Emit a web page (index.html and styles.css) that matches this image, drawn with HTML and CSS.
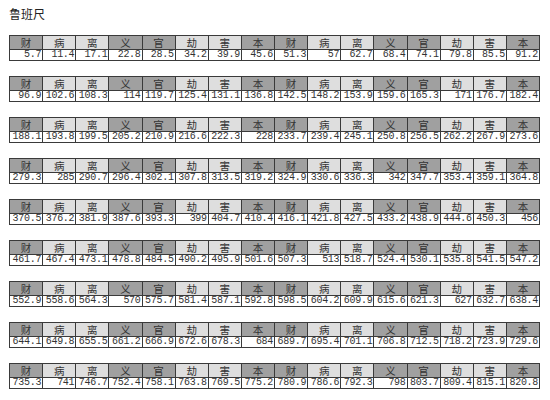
FILE: index.html
```html
<!DOCTYPE html>
<html lang="zh">
<head>
<meta charset="utf-8">
<title>鲁班尺</title>
<link rel="stylesheet" href="styles.css">
</head>
<body>
<div class="page">
<h1 class="title">鲁班尺</h1>
<div class="tables">
<table class="ruler"><tr class="hd"><th class="d">财</th><th class="l">病</th><th class="l">离</th><th class="d">义</th><th class="d">官</th><th class="l">劫</th><th class="l">害</th><th class="d">本</th><th class="d">财</th><th class="l">病</th><th class="l">离</th><th class="d">义</th><th class="d">官</th><th class="l">劫</th><th class="l">害</th><th class="d">本</th></tr>
<tr class="vals"><td>5.7</td><td>11.4</td><td>17.1</td><td>22.8</td><td>28.5</td><td>34.2</td><td>39.9</td><td>45.6</td><td>51.3</td><td>57</td><td>62.7</td><td>68.4</td><td>74.1</td><td>79.8</td><td>85.5</td><td>91.2</td></tr></table>
<table class="ruler"><tr class="hd"><th class="d">财</th><th class="l">病</th><th class="l">离</th><th class="d">义</th><th class="d">官</th><th class="l">劫</th><th class="l">害</th><th class="d">本</th><th class="d">财</th><th class="l">病</th><th class="l">离</th><th class="d">义</th><th class="d">官</th><th class="l">劫</th><th class="l">害</th><th class="d">本</th></tr>
<tr class="vals"><td>96.9</td><td>102.6</td><td>108.3</td><td>114</td><td>119.7</td><td>125.4</td><td>131.1</td><td>136.8</td><td>142.5</td><td>148.2</td><td>153.9</td><td>159.6</td><td>165.3</td><td>171</td><td>176.7</td><td>182.4</td></tr></table>
<table class="ruler"><tr class="hd"><th class="d">财</th><th class="l">病</th><th class="l">离</th><th class="d">义</th><th class="d">官</th><th class="l">劫</th><th class="l">害</th><th class="d">本</th><th class="d">财</th><th class="l">病</th><th class="l">离</th><th class="d">义</th><th class="d">官</th><th class="l">劫</th><th class="l">害</th><th class="d">本</th></tr>
<tr class="vals"><td>188.1</td><td>193.8</td><td>199.5</td><td>205.2</td><td>210.9</td><td>216.6</td><td>222.3</td><td>228</td><td>233.7</td><td>239.4</td><td>245.1</td><td>250.8</td><td>256.5</td><td>262.2</td><td>267.9</td><td>273.6</td></tr></table>
<table class="ruler"><tr class="hd"><th class="d">财</th><th class="l">病</th><th class="l">离</th><th class="d">义</th><th class="d">官</th><th class="l">劫</th><th class="l">害</th><th class="d">本</th><th class="d">财</th><th class="l">病</th><th class="l">离</th><th class="d">义</th><th class="d">官</th><th class="l">劫</th><th class="l">害</th><th class="d">本</th></tr>
<tr class="vals"><td>279.3</td><td>285</td><td>290.7</td><td>296.4</td><td>302.1</td><td>307.8</td><td>313.5</td><td>319.2</td><td>324.9</td><td>330.6</td><td>336.3</td><td>342</td><td>347.7</td><td>353.4</td><td>359.1</td><td>364.8</td></tr></table>
<table class="ruler"><tr class="hd"><th class="d">财</th><th class="l">病</th><th class="l">离</th><th class="d">义</th><th class="d">官</th><th class="l">劫</th><th class="l">害</th><th class="d">本</th><th class="d">财</th><th class="l">病</th><th class="l">离</th><th class="d">义</th><th class="d">官</th><th class="l">劫</th><th class="l">害</th><th class="d">本</th></tr>
<tr class="vals"><td>370.5</td><td>376.2</td><td>381.9</td><td>387.6</td><td>393.3</td><td>399</td><td>404.7</td><td>410.4</td><td>416.1</td><td>421.8</td><td>427.5</td><td>433.2</td><td>438.9</td><td>444.6</td><td>450.3</td><td>456</td></tr></table>
<table class="ruler"><tr class="hd"><th class="d">财</th><th class="l">病</th><th class="l">离</th><th class="d">义</th><th class="d">官</th><th class="l">劫</th><th class="l">害</th><th class="d">本</th><th class="d">财</th><th class="l">病</th><th class="l">离</th><th class="d">义</th><th class="d">官</th><th class="l">劫</th><th class="l">害</th><th class="d">本</th></tr>
<tr class="vals"><td>461.7</td><td>467.4</td><td>473.1</td><td>478.8</td><td>484.5</td><td>490.2</td><td>495.9</td><td>501.6</td><td>507.3</td><td>513</td><td>518.7</td><td>524.4</td><td>530.1</td><td>535.8</td><td>541.5</td><td>547.2</td></tr></table>
<table class="ruler"><tr class="hd"><th class="d">财</th><th class="l">病</th><th class="l">离</th><th class="d">义</th><th class="d">官</th><th class="l">劫</th><th class="l">害</th><th class="d">本</th><th class="d">财</th><th class="l">病</th><th class="l">离</th><th class="d">义</th><th class="d">官</th><th class="l">劫</th><th class="l">害</th><th class="d">本</th></tr>
<tr class="vals"><td>552.9</td><td>558.6</td><td>564.3</td><td>570</td><td>575.7</td><td>581.4</td><td>587.1</td><td>592.8</td><td>598.5</td><td>604.2</td><td>609.9</td><td>615.6</td><td>621.3</td><td>627</td><td>632.7</td><td>638.4</td></tr></table>
<table class="ruler"><tr class="hd"><th class="d">财</th><th class="l">病</th><th class="l">离</th><th class="d">义</th><th class="d">官</th><th class="l">劫</th><th class="l">害</th><th class="d">本</th><th class="d">财</th><th class="l">病</th><th class="l">离</th><th class="d">义</th><th class="d">官</th><th class="l">劫</th><th class="l">害</th><th class="d">本</th></tr>
<tr class="vals"><td>644.1</td><td>649.8</td><td>655.5</td><td>661.2</td><td>666.9</td><td>672.6</td><td>678.3</td><td>684</td><td>689.7</td><td>695.4</td><td>701.1</td><td>706.8</td><td>712.5</td><td>718.2</td><td>723.9</td><td>729.6</td></tr></table>
<table class="ruler"><tr class="hd"><th class="d">财</th><th class="l">病</th><th class="l">离</th><th class="d">义</th><th class="d">官</th><th class="l">劫</th><th class="l">害</th><th class="d">本</th><th class="d">财</th><th class="l">病</th><th class="l">离</th><th class="d">义</th><th class="d">官</th><th class="l">劫</th><th class="l">害</th><th class="d">本</th></tr>
<tr class="vals"><td>735.3</td><td>741</td><td>746.7</td><td>752.4</td><td>758.1</td><td>763.8</td><td>769.5</td><td>775.2</td><td>780.9</td><td>786.6</td><td>792.3</td><td>798</td><td>803.7</td><td>809.4</td><td>815.1</td><td>820.8</td></tr></table>
</div>
</div>
</body>
</html>
```
FILE: styles.css
```css
html, body {
  margin: 0;
  padding: 0;
  background: #ffffff;
}
.page {
  padding: 7px 10px 0 9px;
  font-family: "Noto Sans CJK SC", "Liberation Sans", sans-serif;
  color: #2a2a2a;
}
.title {
  margin: 0;
  height: 28px;
  font-size: 12px;
  line-height: 14px;
  font-weight: normal;
  color: #222;
}
.tables {
  display: flex;
  flex-direction: column;
  gap: 15px;
}
.ruler {
  width: 531px;
  table-layout: fixed;
  border-collapse: collapse;
  border: 1px solid #3a3a3a;
}
.ruler th,
.ruler td {
  border: 1px solid #3a3a3a;
  padding: 0;
  overflow: hidden;
  white-space: nowrap;
}
.hd th {
  height: 13px;
  font-size: 10.5px;
  line-height: 13px;
  font-weight: normal;
  text-align: center;
  color: #333;
}
.hd .d {
  background: #a0a0a0;
}
.hd .l {
  background: #dedede;
}
.vals td {
  height: 10px;
  font-family: "Liberation Mono", "DejaVu Sans Mono", monospace;
  font-size: 10px;
  line-height: 10px;
  text-align: right;
  padding-right: 1px;
  letter-spacing: -0.3px;
  color: #333;
  background: #fff;
}
```
